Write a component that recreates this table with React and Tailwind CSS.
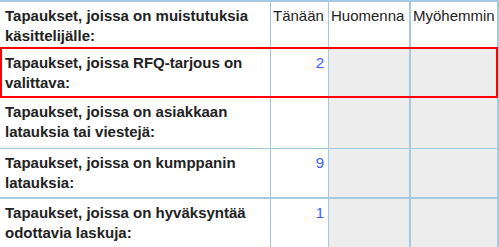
const rows = [
  { label: "Tapaukset, joissa RFQ-tarjous on valittava:", today: "2", flagged: true, h: "h-[51px]", border: "" },
  { label: "Tapaukset, joissa on asiakkaan latauksia tai viestejä:", today: "", h: "h-[51px]", border: "border-b border-[#a6c9e2]" },
  { label: "Tapaukset, joissa on kumppanin latauksia:", today: "9", h: "h-[50px]", border: "border-b-2 border-[#a6c9e2]" },
  { label: "Tapaukset, joissa on hyväksyntää odottavia laskuja:", today: "1", h: "h-[50px]", border: "" },
];

const Cells = ({ label, today }) => (
  <>
    <div className="w-[268px] shrink-0 pl-[3px] pr-2 pt-[4px] font-bold leading-5">{label}</div>
    <div className="w-[58px] shrink-0 border-l border-[#a6c9e2] pr-[4px] pt-[4px] text-right leading-5 text-[#3a5cff]">
      {today}
    </div>
    <div className="w-[81px] shrink-0 border-l border-[#a6c9e2] bg-[#ededed]" />
    <div className="flex-1 border-l-2 border-[#a6c9e2] bg-[#ededed]" />
  </>
);

export default function App() {
  return (
    <div className="h-[247px] w-[499px] overflow-hidden bg-white text-[15px] text-[#222] [font-family:'Liberation_Sans',Arial,sans-serif]">
      <div className="border-r-2 border-[#a6c9e2]">
        {/* column headers */}
        <div className="flex h-[47px] border-t-2 border-[#a6c9e2]">
          <div className="w-[270px] shrink-0 pl-[5px] pt-[4px] font-bold leading-5">
            Tapaukset, joissa on muistutuksia käsittelijälle:
          </div>
          <div className="w-[58px] shrink-0 border-l border-[#a6c9e2] pl-[2px] pt-[4px] leading-5">Tänään</div>
          <div className="w-[81px] shrink-0 border-l border-[#a6c9e2] pl-[2px] pt-[4px] leading-5">Huomenna</div>
          <div className="flex-1 border-l-2 border-[#a6c9e2] pl-[2px] pt-[4px] leading-5">Myöhemmin</div>
        </div>

        {rows.map((r) =>
          r.flagged ? (
            <div key={r.label} className={`flex ${r.h} border-2 border-[#ff0000] mr-[-1px]`}>
              <Cells label={r.label} today={r.today} />
            </div>
          ) : (
            <div key={r.label} className={`flex ${r.h} ${r.border} pl-[2px]`}>
              <Cells label={r.label} today={r.today} />
            </div>
          )
        )}
      </div>
    </div>
  );
}
